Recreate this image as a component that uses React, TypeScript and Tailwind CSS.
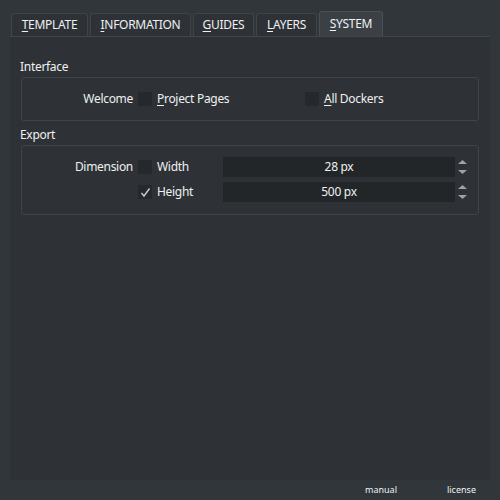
import React from "react"

const tabs = [
  { key: "T", rest: "EMPLATE", w: "w-[77px]" },
  { key: "I", rest: "NFORMATION", w: "w-[101px]" },
  { key: "G", rest: "UIDES", w: "w-[61px]" },
  { key: "L", rest: "AYERS", w: "w-[61px]" },
]

function Check({ checked }: { checked?: boolean }) {
  return (
    <div className="w-[14px] h-[14px] bg-[#25282c] flex items-center justify-center shrink-0">
      {checked && (
        <svg width="11" height="11" viewBox="0 0 11 11">
          <path d="M1.5 6 L4 9 L9.5 1.5" fill="none" stroke="#c8cacc" strokeWidth="1.4" />
        </svg>
      )}
    </div>
  )
}

function Spin({ value }: { value: string }) {
  return (
    <div className="flex items-center h-[20px]">
      <div className="w-[232px] h-[20px] bg-[#232629] flex items-center justify-center">{value}</div>
      <div className="w-[15px] h-[20px] flex flex-col items-center justify-center gap-[6px]">
        <svg width="9" height="4" viewBox="0 0 9 4">
          <path d="M0 4 L4.5 0 L9 4 Z" fill="#9ea2a6" />
        </svg>
        <svg width="9" height="4" viewBox="0 0 9 4">
          <path d="M0 0 L9 0 L4.5 4 Z" fill="#9ea2a6" />
        </svg>
      </div>
    </div>
  )
}

export default function App() {
  return (
    <div
      className="w-[500px] h-[500px] bg-[#31363b] flex flex-col text-[#eff0f1] text-[12px] tracking-[-0.3px]"
      style={{ fontFamily: '"Noto Sans", sans-serif' }}
    >
      <div className="h-[36px] flex items-end pl-[11px] gap-[2px]">
        {tabs.map((t) => (
          <div
            key={t.key}
            className={`${t.w} h-[23px] bg-[#2e3237] border border-b-0 border-[#3f4449] rounded-t-[3px] flex items-center justify-center`}
          >
            <span>
              <u className="underline-offset-2">{t.key}</u>
              {t.rest}
            </span>
          </div>
        ))}
        <div className="w-[64px] h-[25px] bg-[#3b4045] border border-b-0 border-[#4a4f55] rounded-t-[3px] flex items-center justify-center">
          <span>
            <u className="underline-offset-2">S</u>YSTEM
          </span>
        </div>
      </div>

      <div className="mx-[10px] h-[444px] bg-[#2e3237] border-t border-[#40454a] flex flex-col px-[10px]">
        <div className="h-[40px] pt-[20px] leading-[20px]">Interface</div>
        <div className="mx-[1px] h-[44px] border border-[#40454b] rounded-[3px] flex items-center">
          <div className="w-[116px] text-right pr-[5px]">Welcome</div>
          <div className="w-[167px] flex items-center gap-[5px]">
            <Check />
            <span>
              <u className="underline-offset-2">P</u>roject Pages
            </span>
          </div>
          <div className="flex items-center gap-[5px]">
            <Check />
            <span>
              <u className="underline-offset-2">A</u>ll Dockers
            </span>
          </div>
        </div>

        <div className="h-[24px] pt-[4px] leading-[20px]">Export</div>
        <div className="mx-[1px] h-[70px] border border-[#40454b] rounded-[3px] flex flex-col pt-[11px] gap-[5px]">
          <div className="flex items-center h-[20px]">
            <div className="w-[116px] text-right pr-[5px]">Dimension</div>
            <div className="w-[85px] flex items-center gap-[5px]">
              <Check />
              <span>Width</span>
            </div>
            <Spin value="28 px" />
          </div>
          <div className="flex items-center h-[20px]">
            <div className="w-[116px]" />
            <div className="w-[85px] flex items-center gap-[5px]">
              <Check checked />
              <span>Height</span>
            </div>
            <Spin value="500 px" />
          </div>
        </div>
      </div>

      <div className="flex-1 flex items-center text-[9px] tracking-normal">
        <span className="ml-[365px]">manual</span>
        <span className="ml-[50px]">license</span>
      </div>
    </div>
  )
}
